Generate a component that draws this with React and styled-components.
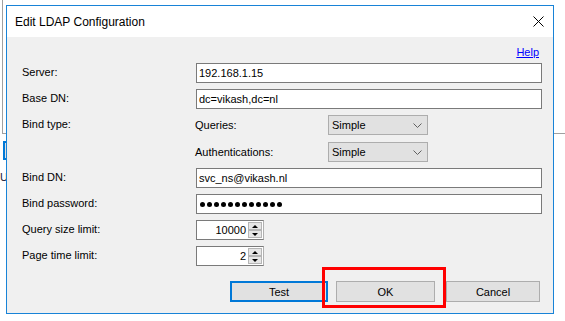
import React from "react";
import styled, { createGlobalStyle } from "styled-components";

const Global = createGlobalStyle`
  html, body { margin: 0; padding: 0; background: #ffffff; }
  body { font-family: "Liberation Sans", Arial, sans-serif; font-size: 11px; color: #000; }
  * { box-sizing: border-box; }
`;

const Page = styled.div`
  position: relative;
  width: 565px;
  height: 321px;
  overflow: hidden;
  background: #ffffff;
`;

/* parent window that sits behind the dialog */
const ParentPanel = styled.div`
  margin-left: 2px;
  height: 134px;
  border-left: 1px solid #a0a0a0;
  border-bottom: 1px solid #a0a0a0;
`;

const ParentButton = styled.div`
  margin: 7px 0 0 3px;
  width: 60px;
  height: 19px;
  border: 2px solid #0078d7;
  background: #e1e1e1;
`;

const ParentLabel = styled.div`
  margin: 11px 0 0 0;
  font-size: 11px;
  line-height: 13px;
  color: #1b1b3a;
`;

const Dialog = styled.div`
  position: absolute;
  left: 6px;
  top: 5px;
  width: 548px;
  height: 309px;
  border: 1px solid #1883d7;
  background: #f0f0f0;
  display: flex;
  flex-direction: column;
`;

const TitleBar = styled.div`
  height: 31px;
  background: #ffffff;
  display: flex;
  align-items: center;
  justify-content: space-between;
  padding: 0 9px 0 8px;
`;

const Title = styled.span`
  font-size: 12px;
  color: #000;
  padding-top: 1px;
`;

const CloseBtn = styled.div`
  width: 12px;
  height: 12px;
  display: flex;
  align-items: center;
  justify-content: center;
`;

const Body = styled.div`
  flex: 1;
  padding: 9px 11px 0 15px;
  display: flex;
  flex-direction: column;
`;

const HelpRow = styled.div`
  display: flex;
  justify-content: flex-end;
  padding-right: 3px;
  height: 13px;
  margin-bottom: 4px;
`;

const HelpLink = styled.a`
  color: #0000ff;
  text-decoration: underline;
  font-size: 11px;
  line-height: 13px;
  cursor: pointer;
`;

const FormGrid = styled.div`
  display: grid;
  grid-template-columns: 174px 1fr;
  row-gap: 6px;
  align-items: start;
`;

const Label = styled.div`
  height: ${(p) => (p.$h ? p.$h : 20)}px;
  line-height: 18px;
  white-space: nowrap;
`;

const TextBox = styled.div`
  height: 20px;
  border: 1px solid #7a7a7a;
  background: #ffffff;
  padding-left: 2px;
  line-height: 18px;
  white-space: nowrap;
  overflow: hidden;
`;

const SubGrid = styled.div`
  display: grid;
  grid-template-columns: 132px 100px;
  row-gap: 7px;
  align-items: center;
`;

const SubLabel = styled.div`
  margin-left: -1px;
  line-height: 18px;
`;

const Select = styled.div`
  height: 20px;
  border: 1px solid #adadad;
  background: #e1e1e1;
  display: flex;
  align-items: center;
  justify-content: space-between;
  padding: 0 5px 0 3px;
`;

const Dots = styled.div`
  display: flex;
  gap: 2px;
  align-items: center;
  height: 18px;
  padding-left: 1px;
`;

const Dot = styled.span`
  width: 5px;
  height: 5px;
  border-radius: 50%;
  background: #000;
`;

const Spin = styled.div`
  width: 68px;
  height: 20px;
  border: 1px solid #7a7a7a;
  border-right-color: #b0b0b0;
  background: #ffffff;
  display: flex;
`;

const SpinValue = styled.div`
  flex: 1;
  text-align: right;
  padding-right: 1px;
  line-height: 18px;
`;

const SpinButtons = styled.div`
  width: 16px;
  display: flex;
  flex-direction: column;
  padding: 1px;
`;

const SpinBtn = styled.div`
  flex: 1;
  background: #e6e6e6;
  border: 1px solid #b5b5b5;
  display: flex;
  align-items: center;
  justify-content: center;
`;

const Tri = styled.span`
  width: 0;
  height: 0;
  border-left: 3px solid transparent;
  border-right: 3px solid transparent;
  ${(p) =>
    p.$down
      ? "border-top: 3px solid #000;"
      : "border-bottom: 3px solid #000;"}
`;

const ButtonRow = styled.div`
  display: flex;
  justify-content: flex-end;
  margin-top: 15px;
  padding-right: 2px;
`;

const Button = styled.div`
  width: ${(p) => p.$w}px;
  height: 21px;
  margin-right: ${(p) => p.$mr || 0}px;
  background: #e1e1e1;
  border: ${(p) => (p.$focus ? "2px solid #0078d7" : "1px solid #adadad")};
  display: flex;
  align-items: center;
  justify-content: center;
  font-size: 11px;
`;

const Highlight = styled.div`
  position: absolute;
  left: 322px;
  top: 267px;
  width: 124px;
  height: 41px;
  border: 3px solid #ff0000;
  pointer-events: none;
`;

const Chevron = () => (
  <svg width="9" height="5" viewBox="0 0 9 5">
    <path d="M0.5 0.5 L4.5 4.5 L8.5 0.5" fill="none" stroke="#606060" strokeWidth="1" />
  </svg>
);

const Spinner = ({ value }) => (
  <Spin>
    <SpinValue>{value}</SpinValue>
    <SpinButtons>
      <SpinBtn><Tri /></SpinBtn>
      <SpinBtn><Tri $down /></SpinBtn>
    </SpinButtons>
  </Spin>
);

export default function App() {
  return (
    <Page>
      <Global />
      <ParentPanel />
      <ParentButton />
      <ParentLabel>U</ParentLabel>
      <Dialog>
        <TitleBar>
          <Title>Edit LDAP Configuration</Title>
          <CloseBtn>
            <svg width="11" height="11" viewBox="0 0 11 11">
              <path d="M0.5 0.5 L10.5 10.5 M10.5 0.5 L0.5 10.5" stroke="#000" strokeWidth="1" />
            </svg>
          </CloseBtn>
        </TitleBar>
        <Body>
          <HelpRow>
            <HelpLink>Help</HelpLink>
          </HelpRow>
          <FormGrid>
            <Label>Server:</Label>
            <TextBox>192.168.1.15</TextBox>
            <Label>Base DN:</Label>
            <TextBox>dc=vikash,dc=nl</TextBox>
            <Label $h={47}>Bind type:</Label>
            <SubGrid>
              <SubLabel>Queries:</SubLabel>
              <Select>Simple<Chevron /></Select>
              <SubLabel>Authentications:</SubLabel>
              <Select>Simple<Chevron /></Select>
            </SubGrid>
            <Label>Bind DN:</Label>
            <TextBox>svc_ns@vikash.nl</TextBox>
            <Label>Bind password:</Label>
            <TextBox>
              <Dots>
                {Array.from({ length: 12 }).map((_, i) => (
                  <Dot key={i} />
                ))}
              </Dots>
            </TextBox>
            <Label>Query size limit:</Label>
            <Spinner value="10000" />
            <Label>Page time limit:</Label>
            <Spinner value="2" />
          </FormGrid>
          <ButtonRow>
            <Button $w={98} $mr={8} $focus>Test</Button>
            <Button $w={99} $mr={11}>OK</Button>
            <Button $w={94}>Cancel</Button>
          </ButtonRow>
        </Body>
      </Dialog>
      <Highlight />
    </Page>
  );
}
